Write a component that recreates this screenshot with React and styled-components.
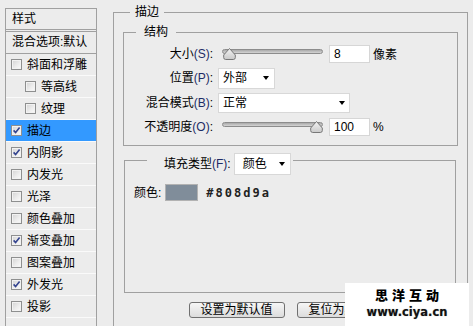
import styled, { createGlobalStyle } from "styled-components";

const GlobalStyle = createGlobalStyle`
  html, body {
    margin: 0;
    padding: 0;
    background: #ececec;
    overflow: hidden;
  }
  body {
    font-family: "Liberation Sans", "Noto Sans CJK SC", sans-serif;
    font-size: 12px;
    color: #000;
  }
`;

const Page = styled.div`
  position: relative;
  width: 473px;
  height: 326px;
  box-sizing: border-box;
  padding-left: 5px;
  display: flex;
  align-items: flex-start;
  gap: 16px;
  overflow: hidden;
`;

// ---------- left list ----------
const StyleList = styled.div`
  flex-shrink: 0;
  margin-top: 8px;
  width: 92px;
  height: 340px;
  box-sizing: border-box;
  border: 1px solid #a0a0a0;
  border-bottom: none;
`;

const ListHeader = styled.div`
  height: 20px;
  line-height: 20px;
  padding-left: 6px;
  border-bottom: 1px solid #a0a0a0;
  margin-bottom: 1px;
`;

const BlendRow = styled.div`
  height: 21px;
  line-height: 21px;
  padding-left: 6px;
  border-top: 1px solid #a0a0a0;
  border-bottom: 1px solid #a0a0a0;
  white-space: nowrap;
`;

const ListRow = styled.div`
  height: 21px;
  display: flex;
  align-items: center;
  gap: 5px;
  padding-left: ${(p) => (p.$indent ? 19 : 5)}px;
  border-bottom: 1px solid #fafafa;
  background: ${(p) => (p.$active ? "#3399ff" : "transparent")};
  white-space: nowrap;
  line-height: 14px;
`;

const Box = styled.span`
  width: 11px;
  height: 11px;
  box-sizing: border-box;
  border: 1px solid #8e8f8f;
  background: linear-gradient(135deg, #d2d2d2 0%, #ececec 55%, #fbfbfb 100%);
  box-shadow: inset 0 0 0 1px #f2f2f2;
  display: flex;
  align-items: center;
  justify-content: center;
  flex-shrink: 0;
`;

function Checkbox({ checked }) {
  return (
    <Box>
      {checked && (
        <svg width="9" height="9" viewBox="0 0 9 9">
          <path d="M1.6 4.4 L3.6 6.6 L7.6 1.6" fill="none" stroke="#34448f" strokeWidth="1.6" />
        </svg>
      )}
    </Box>
  );
}

const effects = [
  { name: "斜面和浮雕" },
  { name: "等高线", indent: true },
  { name: "纹理", indent: true },
  { name: "描边", checked: true, active: true },
  { name: "内阴影", checked: true },
  { name: "内发光" },
  { name: "光泽" },
  { name: "颜色叠加" },
  { name: "渐变叠加", checked: true },
  { name: "图案叠加" },
  { name: "外发光", checked: true },
  { name: "投影" },
];

// ---------- group boxes ----------
const OuterGroup = styled.fieldset`
  flex-shrink: 0;
  margin: 5px 0 0 0;
  width: 355px;
  height: 360px;
  box-sizing: border-box;
  padding: 5px 9px 0 9px;
  border: 1px solid #a0a0a0;
  min-width: 0;
`;

const Legend = styled.legend`
  margin-left: ${(p) => p.$offset}px;
  padding: 0 ${(p) => p.$pad}px;
  line-height: 15px;
  font-size: 12px;
`;

const StructGroup = styled.fieldset`
  margin: 0;
  padding: 1px 0 6px 0;
  border: 1px solid #a0a0a0;
  min-width: 0;
`;

const FormGrid = styled.div`
  display: grid;
  grid-template-columns: 89px 1fr;
  grid-template-rows: 25px 24px 25px 24px;
  column-gap: 5px;
  align-items: center;
`;

const Label = styled.span`
  justify-self: end;
  line-height: 14px;
  white-space: nowrap;
`;

const Key = styled.span`
  color: #1e2c66;
`;

const Controls = styled.div`
  display: flex;
  align-items: center;
`;

const Slider = styled.div`
  position: relative;
  width: 101px;
  height: 14px;
  margin-left: 4px;
  margin-right: 6px;
`;

const Track = styled.div`
  margin-top: 2px;
  height: 5px;
  box-sizing: border-box;
  border: 1px solid #8c8c8c;
  border-radius: 3px;
  background: linear-gradient(#a9a9a9, #d4d4d4);
`;

const Thumb = styled.svg`
  position: absolute;
  top: 1px;
`;

function RangeSlider({ value }) {
  return (
    <Slider>
      <Track />
      <Thumb width="13" height="12" viewBox="0 0 13 12" style={{ left: 1 + (value / 100) * 87 }}>
        <defs>
          <linearGradient id={`tg${value}`} x1="0" y1="0" x2="0" y2="1">
            <stop offset="0" stopColor="#f4f4f4" />
            <stop offset="1" stopColor="#c9c9c9" />
          </linearGradient>
        </defs>
        <path
          d="M6.5 0.5 L12.3 7 L12.3 9.5 Q12.3 11.5 10.3 11.5 L2.7 11.5 Q0.7 11.5 0.7 9.5 L0.7 7 Z"
          fill={`url(#tg${value})`}
          stroke="#777"
        />
      </Thumb>
    </Slider>
  );
}

const NumInput = styled.div`
  width: 41px;
  height: 18px;
  box-sizing: border-box;
  border: 1px solid #d6d6d6;
  background: #fff;
  padding-left: 4px;
  line-height: 16px;
  margin-right: 3px;
`;

const Select = styled.div`
  width: ${(p) => p.$width}px;
  height: ${(p) => p.$height}px;
  box-sizing: border-box;
  border: 1px solid #d8d8d8;
  background: #fff;
  display: flex;
  align-items: center;
  justify-content: space-between;
  padding: 0 ${(p) => p.$right}px 0 ${(p) => p.$left}px;
  line-height: 14px;
`;

const Arrow = styled.span`
  width: 0;
  height: 0;
  border-left: 3.5px solid transparent;
  border-right: 3.5px solid transparent;
  border-top: 4px solid #000;
`;

const FillGroup = styled.fieldset`
  margin: 0 2px 0 1px;
  padding: 9px 0 91px 9px;
  border: 1px solid #a0a0a0;
  min-width: 0;
`;

const FillLegend = styled.legend`
  margin-left: 13px;
  padding: 7px 2px 0 17px;
`;

const LegendRow = styled.div`
  display: flex;
  align-items: center;
  gap: 3px;
  line-height: 14px;
`;

const ColorRow = styled.div`
  height: 17px;
  display: flex;
  align-items: center;
  line-height: 14px;
`;

const Swatch = styled.div`
  width: 33px;
  height: 17px;
  box-sizing: border-box;
  margin: 0 8px 0 4px;
  border: 1px solid #b2b2b2;
  background: ${(p) => p.$color};
`;

const HexText = styled.span`
  font-family: "DejaVu Sans Mono", monospace;
  font-weight: bold;
  font-size: 12px;
  letter-spacing: 2px;
  color: #222;
`;

const ButtonRow = styled.div`
  margin-top: 9px;
  display: flex;
  justify-content: center;
  gap: 12px;
`;

const Button = styled.div`
  width: 96px;
  height: 16px;
  box-sizing: border-box;
  border: 1px solid #707070;
  border-radius: 3px;
  background: linear-gradient(#f6f6f6, #dcdcdc);
  text-align: center;
  line-height: 14px;
`;

// ---------- watermark ----------
const Watermark = styled.div`
  position: absolute;
  left: 345px;
  top: 283px;
  width: 124px;
  height: 43px;
  background: #fff;
  display: flex;
  flex-direction: column;
  align-items: center;
  padding-top: 5px;
  box-sizing: border-box;
`;

const MarkTitle = styled.div`
  font-family: "Noto Sans CJK SC", sans-serif;
  font-weight: 900;
  font-size: 13px;
  line-height: 14px;
  letter-spacing: 4px;
  margin-left: 4px;
`;

const MarkUrl = styled.div`
  font-family: "DejaVu Sans", sans-serif;
  font-weight: bold;
  font-size: 11.5px;
  line-height: 12px;
  margin-top: 4px;
  color: #111;
  text-shadow: 0 0 1px #999;
`;

export default function App() {
  return (
    <>
      <GlobalStyle />
      <Page>
        <StyleList>
          <ListHeader>样式</ListHeader>
          <BlendRow>混合选项:默认</BlendRow>
          {effects.map((e) => (
            <ListRow key={e.name} $indent={e.indent} $active={e.active}>
              <Checkbox checked={e.checked} />
              <span>{e.name}</span>
            </ListRow>
          ))}
        </StyleList>

        <OuterGroup>
          <Legend $offset={7} $pad={5}>描边</Legend>
          <StructGroup>
            <Legend $offset={12} $pad={8}>结构</Legend>
            <FormGrid>
              <Label>
                大小<Key>(S)</Key>:
              </Label>
              <Controls>
                <RangeSlider value={0} />
                <NumInput>8</NumInput>
                <span>像素</span>
              </Controls>

              <Label>
                位置<Key>(P)</Key>:
              </Label>
              <Controls>
                <Select $width={57} $height={21} $left={4} $right={5}>
                  外部
                  <Arrow />
                </Select>
              </Controls>

              <Label>
                混合模式<Key>(B)</Key>:
              </Label>
              <Controls>
                <Select $width={132} $height={20} $left={4} $right={4}>
                  正常
                  <Arrow />
                </Select>
              </Controls>

              <Label>
                不透明度<Key>(O)</Key>:
              </Label>
              <Controls>
                <RangeSlider value={100} />
                <NumInput>100</NumInput>
                <span>%</span>
              </Controls>
            </FormGrid>
          </StructGroup>

          <FillGroup>
            <FillLegend>
              <LegendRow>
                <span>
                  填充类型<Key>(F)</Key>:
                </span>
                <Select $width={57} $height={22} $left={8} $right={5}>
                  颜色
                  <Arrow />
                </Select>
              </LegendRow>
            </FillLegend>
            <ColorRow>
              <span>颜色:</span>
              <Swatch $color="#808d9a" />
              <HexText>#808d9a</HexText>
            </ColorRow>
          </FillGroup>

          <ButtonRow>
            <Button>设置为默认值</Button>
            <Button>复位为默认值</Button>
          </ButtonRow>
        </OuterGroup>

        <Watermark>
          <MarkTitle>思洋互动</MarkTitle>
          <MarkUrl>www.ciya.cn</MarkUrl>
        </Watermark>
      </Page>
    </>
  );
}
